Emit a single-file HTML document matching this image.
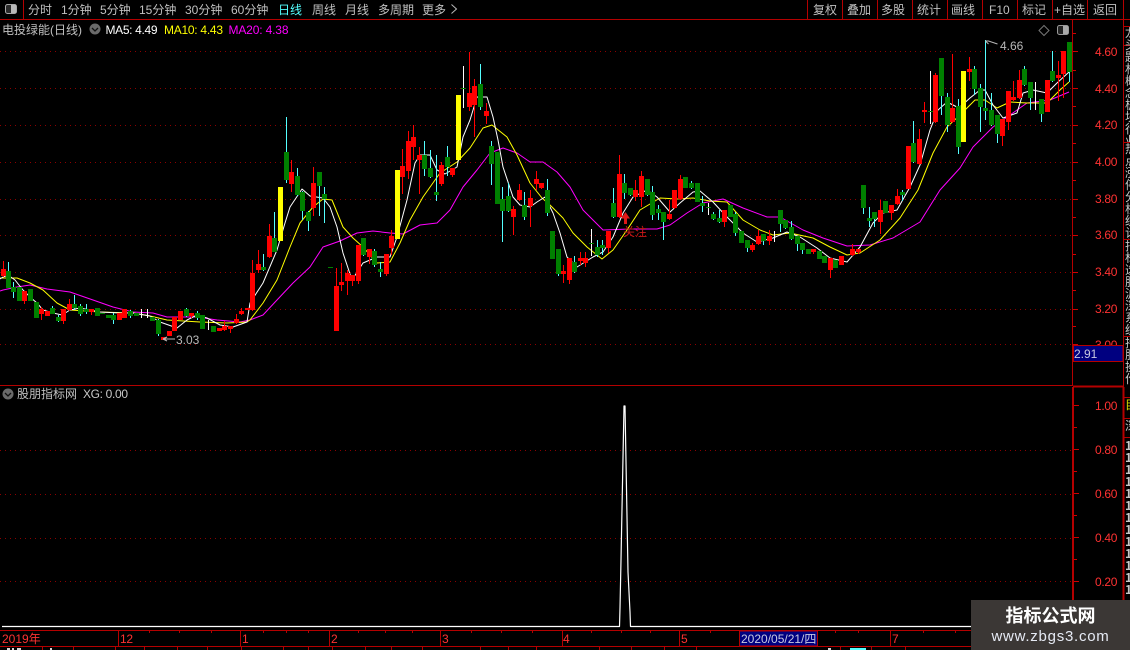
<!DOCTYPE html>
<html lang="zh">
<head>
<meta charset="utf-8">
<title>电投绿能(日线)</title>
<style>
html,body{margin:0;padding:0;background:#000;}
#w{position:relative;width:1130px;height:650px;overflow:hidden;background:#000;}
svg{position:absolute;left:0;top:0;}
text{font-family:"Liberation Sans","WenQuanYi Zen Hei","Noto Sans CJK SC",sans-serif;font-size:12px;}
.tb{fill:#c0c0c0;}
.ax{fill:#ff3232;letter-spacing:-.3px;}
.strip{position:absolute;left:1125px;width:14px;font:12px/12px "WenQuanYi Zen Hei","Noto Sans CJK SC",sans-serif;color:#c8c8c8;word-break:break-all;overflow:hidden;}
#wm{position:absolute;left:971px;top:600px;width:159px;height:50px;background:#3b3735;text-align:center;color:#fff;font-family:"Liberation Sans","Noto Sans CJK SC",sans-serif;}
#wm .a{font-size:18px;font-weight:bold;line-height:20px;margin-top:6px;}
#wm .b{font-size:15px;line-height:18px;margin-top:2px;letter-spacing:.75px;color:#e6eaf4;}
</style>
</head>
<body>
<div id="w">
<svg width="1130" height="650" viewBox="0 0 1130 650" xmlns="http://www.w3.org/2000/svg">
<!-- grid -->
<g stroke="#8c0000" stroke-width="1" stroke-dasharray="1 4" fill="none" shape-rendering="crispEdges">
<path d="M0 51.500H1072M0 88.500H1072M0 125.500H1072M0 162.500H1072M0 199.500H1072M0 235.500H1072M0 272.500H1072M0 309.500H1072M0 344.500H1072"/>
<path d="M0 450.500H1072M0 494.500H1072M0 538.500H1072M0 581.500H1072"/>
</g>
<!-- MA lines -->
<g fill="none" stroke-width="1" stroke-linejoin="round">
<polyline stroke="#ff00ff" points="0,291 3,290 17,287 30,285 47,289 70,292 93,300 113,307 133,312 153,313 167,317 197,317 217,320 240,322 250,320 263,315 277,300 293,283 310,267 323,247 340,241 357,233 373,231 390,233 403,234 420,225 437,223 450,210 463,187 477,170 490,153 503,148 517,153 530,162 543,162 557,172 570,187 583,210 603,230 630,229 657,229 670,225 687,213 703,203 723,199 743,208 767,217 780,217 803,230 823,238 847,246 870,245 893,238 920,222 940,190 960,168 973,147 993,127 1010,115 1027,103 1050,100 1069,92"/>
<polyline stroke="#ffff00" points="0,278 17,278 30,283 43,290 57,303 70,310 100,312 133,313 150,316 167,320 200,322 227,323 247,322 250,320 263,303 277,280 290,247 300,223 313,207 323,199 332,200 343,227 353,238 363,247 377,263 390,262 400,243 410,220 423,197 440,173 457,162 470,148 483,128 492,125 507,137 517,155 530,183 542,198 550,205 563,218 573,233 587,247 602,259 613,250 627,230 640,210 660,198 677,199 693,198 710,201 727,202 743,220 760,230 773,235 790,233 813,238 830,247 847,255 860,253 880,240 900,218 918,190 933,153 947,127 960,115 975,100 985,100 997,108 1010,102 1027,103 1047,103 1060,90 1069,82"/>
<polyline stroke="#ffffff" points="0,279 3,277 8,275 15,280 23,290 30,297 37,303 43,310 53,313 62,315 70,310 80,308 100,312 120,313 133,313 150,316 160,322 177,328 187,320 197,315 207,318 220,325 233,327 247,322 250,303 263,283 277,250 285,223 290,207 302,189 310,196 323,198 330,207 337,227 343,253 352,280 363,263 377,257 390,257 397,237 407,200 415,163 420,155 430,155 437,170 445,174 457,167 463,137 470,120 477,97 487,97 493,117 498,140 503,167 513,197 520,205 530,207 537,202 545,197 553,213 560,233 567,257 577,267 593,257 603,252 613,237 623,213 633,197 647,190 657,197 670,212 680,203 693,192 700,191 713,202 727,217 743,233 757,242 773,238 787,232 800,237 817,248 830,258 847,262 860,247 873,223 883,213 897,210 910,187 920,165 930,130 938,110 947,102 957,107 960,107 970,98 980,90 985,90 993,105 1003,118 1017,113 1023,93 1033,90 1047,93 1057,83 1069,72"/>
</g>
<g transform="translate(.5,0)" fill="none" shape-rendering="crispEdges">
<!-- wicks -->
<path stroke="#54ffff" stroke-width="1" d="M8 262V288M13 282V298M52 306V314M58 315V322M74 295V310M80 304V316M86 304V314M113 313V324M130 310V318M158 319V336M186 308V317M197 311V320M263 254V271M274 212V252M286 117V183M297 168V196M302 191V220M308 211V231M319 172V216M324 187V223M363 238V256M374 249V267M380 262V277M424 141V176M430 150V178M436 155V201M447 146V176M480 64V110M491 141V185M502 187V242M508 183V212M524 192V220M547 179V216M558 249V276M574 256V273M597 240V257M602 240V255M613 188V218M624 174V199M630 188V196M647 179V196M652 186V220M658 205V220M663 212V240M691 181V189M702 196V212M713 212V220M719 210V223M735 212V236M747 240V252M763 234V245M780 210V232M785 221V229M791 221V240M797 236V251M802 243V254M863 185V214M869 207V227M874 212V227M902 190V201M913 121V163M941 58V115M947 93V132M958 99V154M974 66V95M980 84V132M985 40V120M991 93V126M997 115V143M1024 66V86M1030 82V110M1041 99V122M1052 51V82M1069 42V82"/>
<path stroke="#ffffff" stroke-width="1" d="M141 309V318M147 309V318M208 320V330M463 66V108M591 229V256M708 203V215M774 231V242M930 71V124M1035 82V110"/>
<path stroke="#ff0000" stroke-width="1" d="M3 261V277M24 291V304M41 307V320M63 309V324M69 299V311M91 309V315M191 313V318M224 321V331M230 326V333M236 314V324M241 308V315M252 260V311M258 250V273M269 224V258M291 160V192M313 167V216M336 268V331M341 263V291M347 270V295M352 275V286M358 245V284M369 249V264M386 254V276M391 230V255M402 149V194M408 131V179M413 125V160M419 147V194M441 162V186M452 168V177M469 52V111M474 79V137M486 103V124M513 206V235M519 184V201M530 190V227M536 171V190M541 183V189M563 265V283M569 258V284M580 252V265M585 252V267M608 231V253M619 155V218M635 180V201M641 171V207M669 200V220M674 190V209M680 175V200M724 210V227M752 243V252M758 230V245M769 230V245M813 249V254M830 258V278M852 244V256M858 249V254M880 200V234M891 205V220M897 189V205M919 129V165M924 102V123M935 73V123M952 54V123M969 57V81M1002 119V146M1008 91V130M1013 81V101M1019 70V99M1058 61V101M1063 51V98"/>
<!-- bodies -->
<path stroke="#008000" stroke-width="5" d="M8 271V288M13 287V292M19 287V301M30 289V301M36 302V318M52 308V314M58 317V321M74 304V308M80 306V314M86 309V312M97 308V316M108 315V318M113 315V320M130 311V316M136 313V316M152 317V321M158 320V334M186 309V316M197 313V318M202 315V329M213 326V332M263 267V270M274 238V252M286 152V180M297 176V195M302 192V211M308 212V221M319 172V186M324 194V199M363 238V255M374 251V265M380 269V272M424 155V169M430 168V177M436 192V195M447 157V167M480 84V107M491 146V164M497 152V204M502 199V211M508 196V211M524 205V217M547 190V213M552 231V259M558 249V274M574 262V272M597 247V255M602 245V248M613 203V217M624 183V193M630 188V195M647 179V195M652 192V215M658 209V213M663 212V222M685 177V188M691 183V188M697 183V202M702 203V206M713 214V219M719 218V222M730 205V217M735 214V233M741 231V243M747 240V248M763 234V241M780 210V224M785 220V228M791 227V239M797 236V244M802 243V250M808 249V254M819 251V259M824 256V263M835 260V268M863 185V208M869 218V221M874 212V219M885 201V213M902 192V195M913 143V162M941 58V96M947 97V125M958 106V147M974 69V89M980 88V107M985 108V111M991 110V125M997 115V134M1024 69V85M1030 82V98M1041 99V114M1052 71V81M1069 42V72M102 313V314M330 267V268M463 88V89M591 243V244M708 207V208M930 111V112"/>
<path stroke="#ff0000" stroke-width="5" d="M3 269V276M24 291V301M41 309V314M47 311V316M63 309V321M69 304V310M91 309V312M119 313V320M124 309V318M163 337V340M169 331V336M174 317V331M180 311V320M191 313V316M219 328V331M224 326V330M230 326V329M236 319V323M241 311V314M247 308V310M252 273V310M258 264V270M269 236V257M291 172V184M313 183V208M336 286V331M341 282V285M347 273V281M352 275V281M358 245V281M369 249V257M386 254V274M391 236V248M402 166V177M408 141V171M413 137V147M419 155V160M441 165V184M452 168V175M469 93V107M474 86V105M486 111V116M513 209V217M519 190V200M530 198V206M536 179V184M541 183V188M563 271V274M569 258V280M580 258V261M585 258V263M608 231V248M619 174V217M635 190V197M641 176V197M669 214V219M674 190V208M680 179V199M724 210V222M752 245V250M758 236V244M769 236V241M813 249V252M830 258V270M841 256V265M852 249V255M858 249V252M880 210V222M891 205V213M897 196V204M908 146V189M919 139V164M924 110V112M935 75V122M952 108V122M969 69V72M1002 119V136M1008 91V122M1013 97V100M1019 80V98M1047 80V112M1058 75V78M1063 51V74"/>
<path stroke="#ffff00" stroke-width="5" d="M280 187V241M397 170V239M458 95V160M963 71V142"/>
</g>
<!-- price notes -->
<path d="M175 339H163M163 339l4-2M163 339l4 2" stroke="#b8b8b8" stroke-width="1" fill="none"/>
<text x="176" y="344" fill="#b8b8b8">3.03</text>
<path d="M985.500 41h3l9 3M985.500 41l3 3" stroke="#b8b8b8" stroke-width="1" fill="none"/>
<text x="1000" y="50" fill="#b8b8b8">4.66</text>
<path d="M621 218.500l4.500-6.500 4.500 6.500h-3v5.500h-3v-5.500z" fill="#e01818"/>
<text x="623" y="236" fill="#c81818">关注</text>
<!-- sub chart -->
<polyline fill="none" stroke="#ffffff" stroke-width="1.200" stroke-linejoin="round" points="2,626.500 619.500,626.500 620,608 621,560 624,406 625,406 628,572 630,612 630.500,626.500 972,626.500"/>
<!-- frame -->
<g stroke="#b40000" fill="none" shape-rendering="crispEdges">
<path d="M0 19.500H1130"/>
<path d="M23.500 0V19M807.500 0V19M842.500 0V19M877.500 0V19M912.500 0V19M947.500 0V19M982.500 0V19M1017.500 0V19M1052.500 0V19M1087.500 0V19M1123.500 0V19"/>
<path d="M0 385.500H1073"/>
<path d="M1072.500 20V386"/>
<path d="M1123.500 20V630" stroke-width="1"/>
<path d="M1073 386.500H1124" stroke-width="2"/>
<path d="M1073 387V630M1123.500 387V630" stroke-width="2"/>
<path d="M0 630.500H1130M0 646.500H1130"/>
<path d="M118.500 630V646M240.500 630V646M329.500 630V646M440.500 630V646M562.500 630V646M679.500 630V646M890.500 630V646"/>
<path d="M149.500 630V633M179.500 630V633M211.500 630V633M263.500 630V633M286.500 630V633M308.500 630V633M358.500 630V633M385.500 630V633M412.500 630V633M471.500 630V633M501.500 630V633M532.500 630V633M591.500 630V633M621.500 630V633M650.500 630V633M710.500 630V633M835.500 630V633M858.500 630V633M923.500 630V633M955.500 630V633"/>
<path d="M42.500 647V650M73.500 647V650M115.500 647V650M144.500 647V650M177.500 647V650M207.500 647V650M241.500 647V650M283.500 647V650M308.500 647V650M332.500 647V650M365.500 647V650M391.500 647V650M422.500 647V650M480.500 647V650M508.500 647V650M536.500 647V650M599.500 647V650M631.500 647V650M664.500 647V650M696.500 647V650M840.500 647V650M871.500 647V650M905.500 647V650"/>
<path stroke="#d00000" d="M1073 51.500h5M1073 88.500h5M1073 125.500h5M1073 162.500h5M1073 199.500h5M1073 235.500h5M1073 272.500h5M1073 309.500h5M1073 344.500h5M1073 33.500h3M1073 70.500h3M1073 106.500h3M1073 143.500h3M1073 180.500h3M1073 217.500h3M1073 254.500h3M1073 290.500h3M1073 326.500h3"/>
<path stroke="#d00000" d="M1074 405.500h5M1074 449.500h5M1074 493.500h5M1074 537.500h5M1074 581.500h5M1074 427.500h3M1074 471.500h3M1074 515.500h3M1074 559.500h3"/>
<path d="M1124 26.500h6M1124 45.500h6M1124 142.500h6M1124 239.500h6M1124 336.500h6M1124 397.500h6M1124 418.500h6M1124 437.500h6"/>
</g>
<!-- bottom row fragments -->
<path d="M7 648h3v2h-3zM12 648h2v2h-2zM17 648h4v2h-4zM50 648h2v2h-2zM828 648h3v2h-3z" fill="#d8d8d8"/>
<path d="M850 648h16v2h-16z" fill="#54ffff"/>
<!-- top left icon -->
<rect x="5.500" y="4.500" width="11" height="9" rx="2" fill="#2a2a2a" stroke="#a8a8a8"/>
<rect x="11" y="5" width="5" height="8" fill="#b8b8b8"/>
<!-- toolbar left -->
<text class="tb" x="28" y="14">分时</text>
<text class="tb" x="61" y="14">1分钟</text>
<text class="tb" x="100" y="14">5分钟</text>
<text class="tb" x="139" y="14">15分钟</text>
<text class="tb" x="185" y="14">30分钟</text>
<text class="tb" x="231" y="14">60分钟</text>
<text x="278" y="14" fill="#54ffff">日线</text>
<text class="tb" x="312" y="14">周线</text>
<text class="tb" x="345" y="14">月线</text>
<text class="tb" x="378" y="14">多周期</text>
<text class="tb" x="422" y="14">更多</text>
<path d="M451.500 4.500l5 4.500-5 4.500" fill="none" stroke="#b8b8b8"/>
<!-- toolbar right -->
<text class="tb" x="813" y="14">复权</text>
<text class="tb" x="847" y="14">叠加</text>
<text class="tb" x="881" y="14">多股</text>
<text class="tb" x="917" y="14">统计</text>
<text class="tb" x="951" y="14">画线</text>
<text class="tb" x="989" y="14">F10</text>
<text class="tb" x="1022" y="14">标记</text>
<text class="tb" x="1054" y="14">+自选</text>
<text class="tb" x="1093" y="14">返回</text>
<!-- legend -->
<text x="2" y="34" fill="#c0c0c0">电投绿能(日线)</text>
<circle cx="95" cy="29" r="5.500" fill="#6a6a6a"/>
<path d="M92 28l3 3 3-3" fill="none" stroke="#111" stroke-width="1.300"/>
<text x="105.500" y="34" fill="#ffffff" textLength="52" lengthAdjust="spacing">MA5: 4.49</text>
<text x="164" y="34" fill="#ffff00" textLength="59" lengthAdjust="spacing">MA10: 4.43</text>
<text x="228.500" y="34" fill="#ff00ff" textLength="60" lengthAdjust="spacing">MA20: 4.38</text>
<path d="M1044 25.500l5 5-5 5-5-5z" fill="none" stroke="#777"/>
<rect x="1057.500" y="25.500" width="11" height="9" rx="2" fill="#222" stroke="#999"/>
<rect x="1063" y="26" width="5" height="8" fill="#aaa"/>
<text x="17" y="398" fill="#c0c0c0">股朋指标网</text>
<circle cx="8" cy="394" r="5.500" fill="#6a6a6a"/>
<path d="M5 393l3 3 3-3" fill="none" stroke="#111" stroke-width="1.300"/>
<text x="83" y="398" fill="#c8c8c8" textLength="45" lengthAdjust="spacing">XG: 0.00</text>
<!-- y axis labels -->
<text class="ax" x="1095" y="56">4.60</text>
<text class="ax" x="1095" y="93">4.40</text>
<text class="ax" x="1095" y="129">4.20</text>
<text class="ax" x="1095" y="166">4.00</text>
<text class="ax" x="1095" y="203">3.80</text>
<text class="ax" x="1095" y="239">3.60</text>
<text class="ax" x="1095" y="276">3.40</text>
<text class="ax" x="1095" y="313">3.20</text>
<text class="ax" x="1095" y="349">3.00</text>
<rect x="1073.500" y="345.500" width="49.500" height="16" fill="#000080" stroke="#b40000"/>
<text x="1074" y="358" fill="#c8c8e0">2.91</text>
<text class="ax" x="1095" y="410">1.00</text>
<text class="ax" x="1095" y="454">0.80</text>
<text class="ax" x="1095" y="498">0.60</text>
<text class="ax" x="1095" y="542">0.40</text>
<text class="ax" x="1095" y="586">0.20</text>
<!-- time axis -->
<text class="ax" x="2" y="643" style="letter-spacing:0">2019年</text>
<text class="ax" x="120" y="643">12</text>
<text class="ax" x="242" y="643">1</text>
<text class="ax" x="331" y="643">2</text>
<text class="ax" x="442" y="643">3</text>
<text class="ax" x="563" y="643">4</text>
<text class="ax" x="681" y="643">5</text>
<text class="ax" x="892" y="643">7</text>
<rect x="739.500" y="631" width="78" height="15" fill="#000080" stroke="#b40000"/>
<text x="741" y="643" fill="#c8c8e0" style="letter-spacing:0">2020/05/21/四</text>
</svg>
<div class="strip" style="top:27px;height:115px;">龙头题材概念板块行业资金主力</div>
<div class="strip" style="top:143px;height:96px;">热点涨停分析统计数据</div>
<div class="strip" style="top:240px;height:96px;">指标选股沪深系统</div>
<div class="strip" style="top:337px;height:60px;">持股操作</div>
<div class="strip" style="top:399px;height:18px;color:#d8d800;">目</div>
<div class="strip" style="top:420px;height:17px;">深</div>
<div class="strip" style="top:440px;height:160px;font-weight:bold;">1<br>1<br>1<br>1<br>1<br>1<br>1<br>1<br>1<br>1<br>1<br>1<br>1</div>
<div id="wm"><div class="a">指标公式网</div><div class="b">www.zbgs3.com</div></div>
</div>
</body>
</html>
